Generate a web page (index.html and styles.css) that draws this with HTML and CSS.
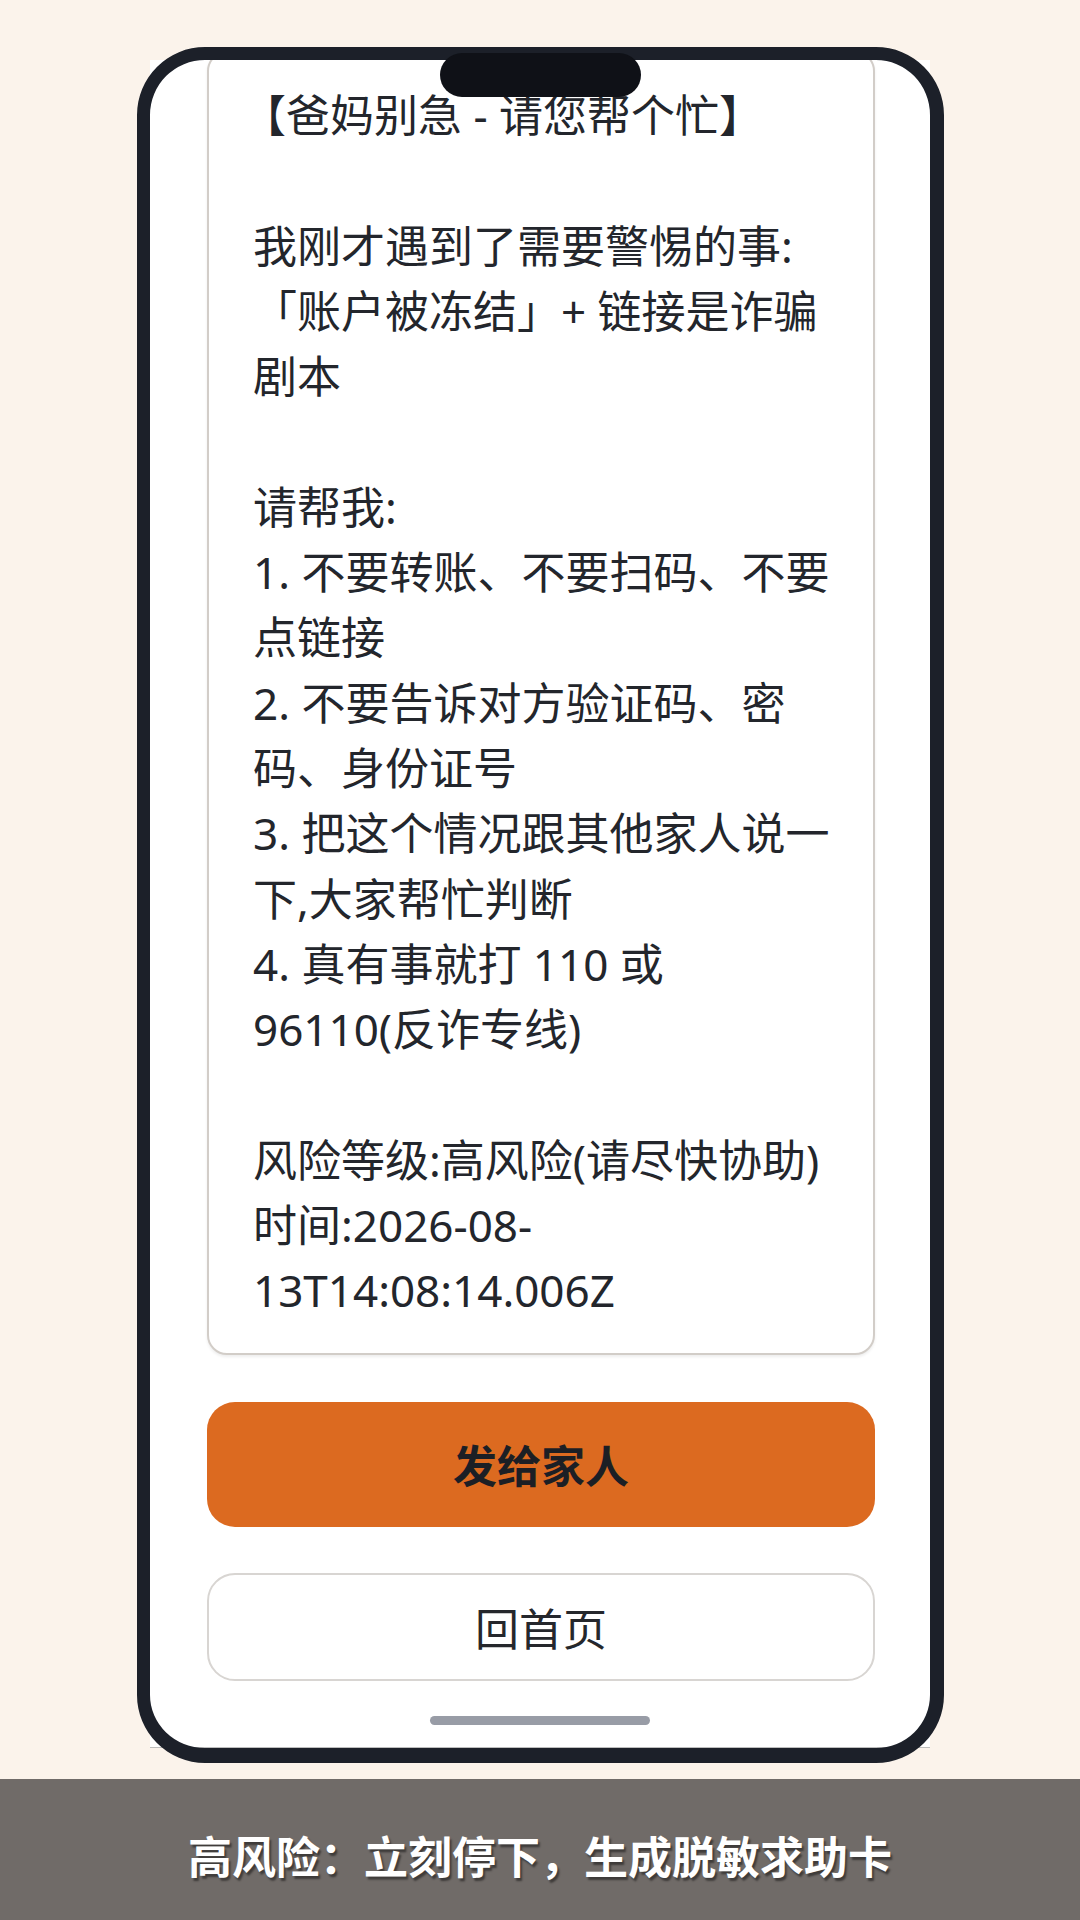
FILE: index.html
```html
<!DOCTYPE html>
<html lang="zh-CN">
<head>
<meta charset="utf-8">
<title>求助卡</title>
<link rel="stylesheet" href="styles.css">
</head>
<body>
<main class="stage">
  <div class="device">
    <div class="screen">
      <div class="scroll">
        <div class="card">
<p class="msg"><span class="msg-title">【爸妈别急 - 请您帮个忙】</span>

我刚才遇到了需要警惕的事:
「账户被冻结」+ 链接是诈骗
剧本

请帮我:
1. 不要转账、不要扫码、不要
点链接
2. 不要告诉对方验证码、密
码、身份证号
3. 把这个情况跟其他家人说一
下,大家帮忙判断
4. 真有事就打 110 或
96110(反诈专线)

风险等级:高风险(请尽快协助)
时间:2026-08-
13T14:08:14.006Z</p>
        </div>
        <button class="btn btn-primary" type="button">发给家人</button>
        <button class="btn btn-secondary" type="button">回首页</button>
      </div>
      <div class="home-bar"></div>
    </div>
    <div class="bezel"></div>
    <div class="notch"></div>
  </div>
</main>
<footer class="caption">高风险：立刻停下，生成脱敏求助卡</footer>
</body>
</html>
```
FILE: styles.css
```css
* {
  box-sizing: border-box;
}

html, body {
  margin: 0;
  padding: 0;
}

body {
  width: 1080px;
  height: 1920px;
  background: #fbf3eb;
  font-family: "Noto Sans", "Noto Sans CJK SC", sans-serif;
  display: flex;
  flex-direction: column;
  overflow: hidden;
}

.stage {
  flex: 1;
  display: flex;
  justify-content: center;
  align-items: flex-start;
}

.device {
  position: relative;
  width: 807px;
  height: 1716px;
  margin-top: 47px;
  margin-left: 1px;
  padding: 13px 14px 15px 13px;
}

.screen {
  position: relative;
  width: 100%;
  height: 100%;
  background: #ffffff;
  border-bottom: 1px solid #bdbdbd;
  overflow: hidden;
}

.scroll {
  margin-top: -9px;
  padding: 0 55px 0 57px;
  display: flex;
  flex-direction: column;
}

.card {
  border: 2px solid #d2cdc8;
  border-radius: 20px;
  padding: 30px 20px 29px 44px;
  box-shadow: 0 2px 3px rgba(0, 0, 0, 0.07);
  background: #ffffff;
}

.msg {
  margin: 0;
  white-space: pre-wrap;
  font-size: 44px;
  line-height: 65.3px;
  color: #23262c;
}

.msg-title {
  margin-left: -11px;
}

.btn {
  display: flex;
  align-items: center;
  justify-content: center;
  width: 100%;
  font-family: "Noto Sans", "Noto Sans CJK SC", sans-serif;
  font-size: 44px;
  border-radius: 28px;
  padding: 0;
  cursor: pointer;
}

.btn-primary {
  margin-top: 47px;
  height: 125px;
  background: #dc6a20;
  border: none;
  color: #1c1f25;
  font-weight: 700;
}

.btn-secondary {
  margin-top: 46px;
  height: 108px;
  background: #ffffff;
  border: 2px solid #d8d5d2;
  color: #25272c;
  font-weight: 400;
}

.home-bar {
  position: absolute;
  left: 0;
  right: 0;
  bottom: 22px;
  margin: 0 auto;
  width: 220px;
  height: 9px;
  border-radius: 5px;
  background: #989ca6;
}

.bezel {
  position: absolute;
  inset: 0;
  border-style: solid;
  border-color: #1c2029;
  border-width: 13px 14px 15px 13px;
  border-radius: 68px;
  pointer-events: none;
}

.notch {
  position: absolute;
  top: 6px;
  left: 303px;
  width: 201px;
  height: 44px;
  border-radius: 22px;
  background: #0f1117;
}

.caption {
  height: 141px;
  flex: none;
  background: #706b68;
  color: #ffffff;
  font-family: "Noto Sans CJK SC", sans-serif;
  font-weight: 700;
  font-size: 44px;
  display: flex;
  align-items: center;
  justify-content: center;
  padding-top: 10px;
  text-shadow: 2px 3px 2px rgba(0, 0, 0, 0.45);
}
```
